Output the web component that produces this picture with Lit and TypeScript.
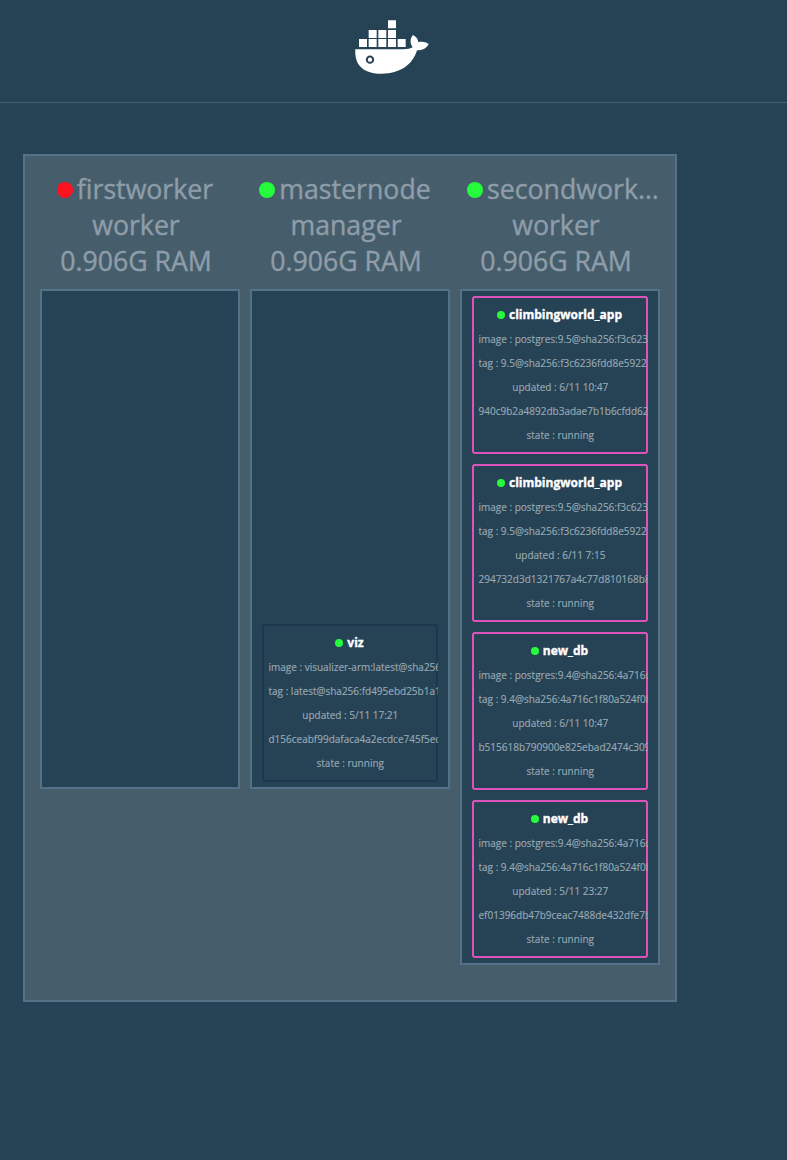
import { LitElement, html, css } from "lit";
import { customElement, property } from "lit/decorators.js";
import { classMap } from "lit/directives/class-map.js";

interface Task { name: string; color: string; lines: string[]; }
interface SwarmNode { name: string; role: string; ram: string; up: boolean; tasks: Task[]; }

const task = (name: string, color: string, image: string, tag: string, updated: string, id: string): Task => ({
  name,
  color,
  lines: [`image : ${image}`, `tag : ${tag}`, `updated : ${updated}`, id, "state : running"],
});

const PG95 = "9.5@sha256:f3c6236fdd8e5922";
const PG94 = "9.4@sha256:4a716c1f80a524f0b";

const NODES: SwarmNode[] = [
  { name: "firstworker", role: "worker", ram: "0.906G RAM", up: false, tasks: [] },
  {
    name: "masternode", role: "manager", ram: "0.906G RAM", up: true,
    tasks: [
      task("viz", "navy", "visualizer-arm:latest@sha256", "latest@sha256:fd495ebd25b1a1", "5/11 17:21", "d156ceabf99dafaca4a2ecdce745f5ec"),
    ],
  },
  {
    name: "secondworker", role: "worker", ram: "0.906G RAM", up: true,
    tasks: [
      task("climbingworld_app", "pink", "postgres:9.5@sha256:f3c623", PG95, "6/11 10:47", "940c9b2a4892db3adae7b1b6cfdd62"),
      task("climbingworld_app", "pink", "postgres:9.5@sha256:f3c623", PG95, "6/11 7:15", "294732d3d1321767a4c77d810168b8"),
      task("new_db", "pink", "postgres:9.4@sha256:4a716c", PG94, "6/11 10:47", "b515618b790900e825ebad2474c309"),
      task("new_db", "pink", "postgres:9.4@sha256:4a716c", PG94, "5/11 23:27", "ef01396db47b9ceac7488de432dfe7b"),
    ],
  },
];

@customElement("task-card")
class TaskCard extends LitElement {
  @property({ attribute: false }) task!: Task;

  static styles = css`
    :host { display: block; }
    .card {
      box-sizing: border-box;
      height: 158px;
      padding: 7px 6px 0;
      border-radius: 3px;
      overflow: hidden;
      text-align: center;
      white-space: nowrap;
      font-size: 10px;
      line-height: 24px;
      color: #9aa9b3;
      -webkit-text-stroke: 0.15px #9aa9b3;
    }
    .pink { box-shadow: inset 0 0 0 2px #de53ba; }
    .navy { box-shadow: inset 0 0 0 2px #1d374f; }
    .title {
      display: flex;
      justify-content: center;
      align-items: center;
      gap: 4px;
      padding-right: 1px;
      font-size: 12px;
      font-weight: 700;
      color: #fff;
      -webkit-text-stroke: 0.35px #fff;
    }
    .line { padding-left: 0.5px; }
    .dot { width: 8px; height: 8px; border-radius: 50%; background: #26fb3b; }
  `;

  render() {
    const t = this.task;
    return html`<div class=${classMap({ card: true, [t.color]: true })}>
      <div class="title"><span class="dot"></span><span>${t.name}</span></div>
      ${t.lines.map((l) => html`<div class="line">${l}</div>`)}
    </div>`;
  }
}

@customElement("swarm-node")
class SwarmNodeView extends LitElement {
  @property({ attribute: false }) node!: SwarmNode;

  static styles = css`
    :host { display: block; width: 200px; }
    .head {
      height: 118px;
      font-size: 26.7px;
      line-height: 36px;
      color: #8e9da8;
      -webkit-text-stroke: 0.4px #8e9da8;
      white-space: nowrap;
    }
    .row { width: 192px; text-align: center; }
    .name { display: flex; justify-content: center; align-items: center; gap: 4px; width: 190px; }
    .name.long { width: 192px; padding-left: 7px; }
    .label { overflow: hidden; text-overflow: ellipsis; }
    .dot { flex: none; width: 16px; height: 16px; margin-top: 1px; border-radius: 50%; background: #fd1220; }
    .dot.up { background: #26fb3b; }
    .tasks {
      box-sizing: border-box;
      min-height: 500px;
      padding: 5px 10px;
      border: 2px solid #537187;
      background: #264356;
      display: flex;
      flex-direction: column;
      justify-content: flex-end;
      gap: 10px;
    }
  `;

  render() {
    const n = this.node;
    return html`
      <div class="head">
        <div class=${classMap({ row: true, name: true, long: n.name.length > 11 })}>
          <span class=${classMap({ dot: true, up: n.up })}></span><span class="label">${n.name}</span>
        </div>
        <div class="row">${n.role}</div>
        <div class="row">${n.ram}</div>
      </div>
      <div class="tasks">${n.tasks.map((t) => html`<task-card .task=${t}></task-card>`)}</div>
    `;
  }
}

@customElement("app-root")
class AppRoot extends LitElement {
  static styles = css`
    :host {
      display: block;
      box-sizing: border-box;
      min-height: 1160px;
      background: #264356;
      font-family: "Open Sans", "Noto Sans", sans-serif;
    }
    .header {
      box-sizing: border-box;
      height: 103px;
      padding: 20px 0 0 355px;
      border-bottom: 1px solid #435e70;
    }
    .logo { display: block; width: 74px; height: 54px; }
    .cluster {
      box-sizing: border-box;
      width: 654px;
      height: 848px;
      margin: 51px 0 0 23px;
      padding: 15px;
      border: 2px solid #537187;
      background: #465d6c;
      display: flex;
      align-items: flex-start;
      gap: 10px;
    }
  `;

  render() {
    return html`
      <header class="header">
        <svg class="logo" viewBox="45 30 222 162" fill="#fff">
          <path d="M57 87h24v24H57zM86 87h24v24H86zM115 87h24v24h-24zM144 87h24v24h-24zM173 87h24v24h-24zM86 60h24v24H86zM115 60h24v24h-24zM144 60h24v24h-24zM144 31h24v24h-24z" />
          <path d="M46 118H190C203 118 212 116 218 112C209 100 210 85 219 75C229 80 234 87 235 97C246 94 257 96 266 102C260 115 247 121 231 121C218 165 180 191 125 191C70 191 43 165 46 118Z" />
          <circle cx="90" cy="149" r="9.5" fill="#fff" stroke="#264356" stroke-width="6" />
        </svg>
      </header>
      <main class="cluster">${NODES.map((n) => html`<swarm-node .node=${n}></swarm-node>`)}</main>
    `;
  }
}
